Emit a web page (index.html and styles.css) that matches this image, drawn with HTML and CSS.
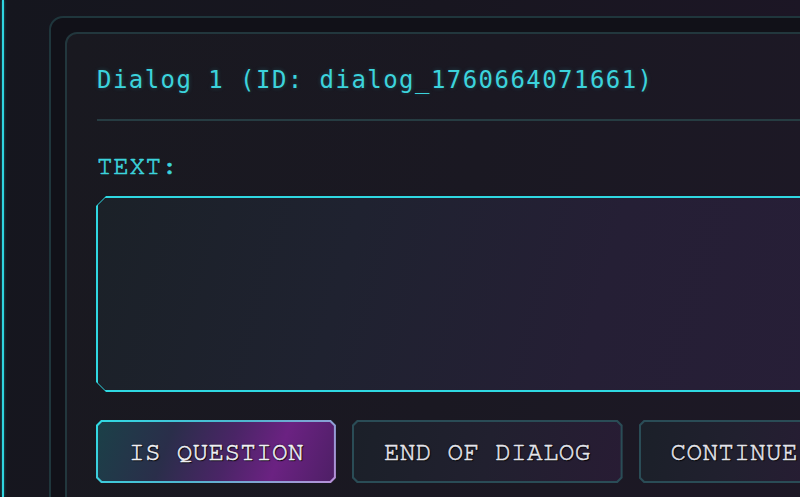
FILE: index.html
```html
<!DOCTYPE html>
<html>
<head>
<meta charset="utf-8">
<link rel="stylesheet" href="styles.css">
</head>
<body>
<div class="app">
  <div class="rail"></div>
  <div class="gutter">
    <div class="outer">
      <div class="panel">
        <h1 class="title">Dialog 1 (ID: dialog_1760664071661)</h1>
        <div class="sep"></div>
        <div class="label">TEXT:</div>
        <div class="field"><div class="field-in"></div></div>
        <div class="buttons">
          <div class="btn active"><div class="btn-in">IS QUESTION</div></div>
          <div class="btn"><div class="btn-in">END OF DIALOG</div></div>
          <div class="btn"><div class="btn-in">CONTINUE</div></div>
        </div>
      </div>
    </div>
  </div>
</div>
</body>
</html>
```
FILE: styles.css
```css
* { box-sizing: border-box; }
html, body {
  margin: 0;
  padding: 0;
  width: 800px;
  height: 497px;
  overflow: hidden;
  background: #15141c;
}
.app {
  display: flex;
  height: 497px;
  background: linear-gradient(100deg, #15161e 0%, #181620 50%, #1d1626 100%);
}
.rail {
  width: 2px;
  margin-left: 2px;
  flex: none;
  background: #2fd4df;
  box-shadow: 0 0 3px rgba(47, 212, 223, 0.5);
}
.gutter {
  flex: none;
  padding: 16px 0 0 45px;
}
.outer {
  width: 900px;
  height: 600px;
  border: 2px solid #1f363c;
  border-radius: 14px;
  padding: 14px;
  background: #111118;
}
.panel {
  height: 100%;
  border: 2px solid #22373d;
  border-radius: 12px;
  padding: 30px 0 0 30px;
  background: linear-gradient(100deg, #191920 0%, #1a1822 45%, #1e1827 100%);
}
.title {
  margin: 0;
  font-family: "DejaVu Sans Mono", monospace;
  font-weight: normal;
  font-size: 24px;
  letter-spacing: 1.45px;
  line-height: 32px;
  color: #3cd3dc;
  text-shadow: 0 0 4px rgba(60, 211, 220, 0.25);
}
.sep {
  margin-top: 23px;
  height: 2px;
  background: #263c42;
}
.label {
  margin-top: 31px;
  font-family: "Nimbus Mono PS", "Nimbus Mono L", "FreeMono", "Courier New", "Liberation Mono", monospace;
  font-size: 26px;
  letter-spacing: 0.6px;
  line-height: 28px;
  color: #3cd3dc;
  -webkit-text-stroke: 0.6px #3cd3dc;
}
.field {
  margin-top: 16px;
  margin-left: -1px;
  height: 196px;
  padding: 2px 0 2px 2px;
  background: #2fd8e2;
  clip-path: polygon(10px 0, 100% 0, 100% 100%, 10px 100%, 0 calc(100% - 10px), 0 10px);
}
.field-in {
  height: 100%;
  background: linear-gradient(105deg, #1b2128 0%, #1f2230 30%, #251f35 60%, #281e38 100%);
  clip-path: polygon(7px 0, 100% 0, 100% 100%, 7px 100%, 0 calc(100% - 7px), 0 7px);
}
.buttons {
  display: flex;
  gap: 16px;
  margin-top: 28px;
  margin-left: -1px;
}
.btn {
  flex: none;
  height: 63px;
  padding: 2px;
  background: #2a4c56;
  clip-path: polygon(5px 0, calc(100% - 5px) 0, 100% 5px, 100% calc(100% - 5px), calc(100% - 5px) 100%, 5px 100%, 0 calc(100% - 5px), 0 5px);
}
.btn-in {
  height: 100%;
  padding: 0 30px;
  display: flex;
  align-items: center;
  font-family: "Nimbus Mono PS", "Nimbus Mono L", "FreeMono", "Courier New", "Liberation Mono", monospace;
  font-size: 26px;
  letter-spacing: 0.3px;
  color: #e4e4ec;
  -webkit-text-stroke: 0.5px #e4e4ec;
  text-shadow: 0 0 2px #000, 1px 1px 1px #000;
  background: linear-gradient(100deg, #1b2029 0%, #21202f 50%, #281c34 100%);
  clip-path: polygon(4px 0, calc(100% - 4px) 0, 100% 4px, 100% calc(100% - 4px), calc(100% - 4px) 100%, 4px 100%, 0 calc(100% - 4px), 0 4px);
}
.btn.active {
  background: linear-gradient(135deg, #30dbe4 0%, #4fb6cf 50%, #b98fd8 100%);
}
.btn.active .btn-in {
  padding: 0 30px 0 31px;
  background: linear-gradient(110deg, #1b4048 0%, #2a2e4a 30%, #4a2566 55%, #6b2282 75%, #4e1f66 100%);
  color: #f0f0f4;
  -webkit-text-stroke: 0.5px #f0f0f4;
}
```
